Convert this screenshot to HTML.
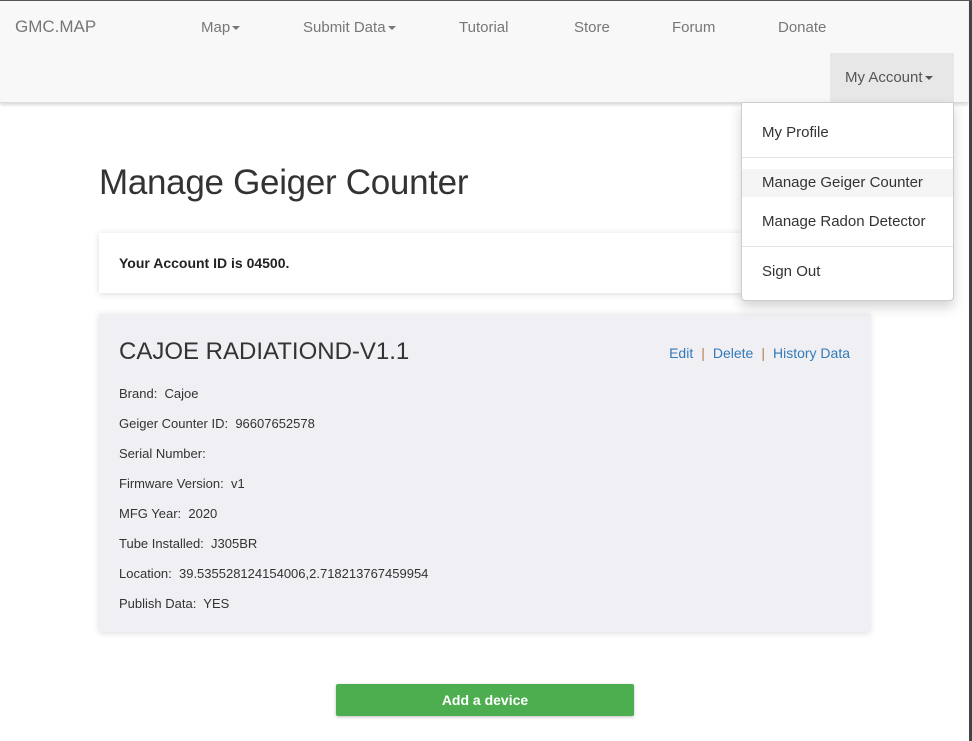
<!DOCTYPE html>
<html><head><style>
body{margin:0;width:972px;height:741px;background:#fff;font-family:"Liberation Sans",sans-serif;color:#333;position:relative;overflow:hidden}
.nav{position:absolute;left:0;top:0;width:968px;height:102px;background:#f8f8f8;border-bottom:1px solid #ddd;box-shadow:0 2px 3px rgba(0,0,0,.15)}
.nav span{position:absolute;top:19px;font-size:15px;color:#777}
.caret{display:inline-block;border-top:4px solid #777;border-left:4px solid transparent;border-right:4px solid transparent;vertical-align:middle;margin-left:2px}
.edge{position:absolute;right:0;top:0;width:3px;height:741px;background:#444;z-index:9}
.topedge{position:absolute;left:0;top:0;width:972px;height:1px;background:#555;z-index:9}
.acct{position:absolute;left:830px;top:53px;width:124px;height:49px;background:#e7e7e7}
.dd{position:absolute;left:741px;top:102px;width:211px;height:197px;background:#fff;border:1px solid #ccc;border-radius:0 0 4px 4px;box-shadow:0 6px 12px rgba(0,0,0,.175);z-index:5}
.dd div{position:absolute;left:0;width:211px;font-size:15px;color:#333;padding-left:20px;box-sizing:border-box}
.dd hr{position:absolute;left:0;width:211px;margin:0;border:0;border-top:1px solid #e5e5e5}
h1{position:absolute;left:99px;top:163px;margin:0;font-weight:normal;font-size:35px;color:#333;letter-spacing:-0.3px}
.idbox{position:absolute;left:99px;top:233px;width:771px;height:60px;background:#fff;box-shadow:0 1px 6px rgba(0,0,0,.15);font-size:14px;font-weight:bold;color:#222}
.card{position:absolute;left:99px;top:314px;width:771px;height:318px;background:#efeff4;box-shadow:0 1px 6px rgba(0,0,0,.15)}
.card h2{position:absolute;left:20px;top:24px;margin:0;font-weight:normal;font-size:24px;color:#333}
.links{position:absolute;right:20px;top:31px;font-size:14px;color:#337ab7}
.links i{font-style:normal;color:#b08050;margin:0 8px}
.row{position:absolute;left:20px;font-size:13px;color:#333}
.btn{position:absolute;left:336px;top:684px;width:298px;height:32px;background:#4cae4f;border-radius:2px;color:#fff;font-weight:bold;font-size:14px;text-align:center;line-height:32px;box-shadow:0 1px 3px rgba(0,0,0,.25)}
</style></head><body>
<div class="nav">
<span style="left:15px;font-size:17px;top:17px">GMC.MAP</span>
<span style="left:201px">Map<i class="caret"></i></span>
<span style="left:303px">Submit Data<i class="caret"></i></span>
<span style="left:459px">Tutorial</span>
<span style="left:574px">Store</span>
<span style="left:672px">Forum</span>
<span style="left:778px">Donate</span>
</div>
<div class="acct"></div>
<span style="position:absolute;left:845px;top:69px;font-size:15px;color:#555">My Account<i class="caret" style="border-top-color:#555"></i></span>
<h1>Manage Geiger Counter</h1>
<div class="idbox"><span style="position:absolute;left:20px;top:22px">Your Account ID is 04500.</span></div>
<div class="dd">
<div style="top:21px">My Profile</div>
<hr style="top:54px">
<div style="top:66px;height:28px;background:#f5f5f5;line-height:28px">Manage Geiger Counter</div>
<div style="top:110px">Manage Radon Detector</div>
<hr style="top:143px">
<div style="top:160px">Sign Out</div>
</div>
<div class="card">
<h2>CAJOE RADIATIOND-V1.1</h2>
<div class="links">Edit<i>|</i>Delete<i>|</i>History Data</div>
<div class="row" style="top:72px">Brand:&nbsp; Cajoe</div>
<div class="row" style="top:102px">Geiger Counter ID:&nbsp; 96607652578</div>
<div class="row" style="top:132px">Serial Number:</div>
<div class="row" style="top:162px">Firmware Version:&nbsp; v1</div>
<div class="row" style="top:192px">MFG Year:&nbsp; 2020</div>
<div class="row" style="top:222px">Tube Installed:&nbsp; J305BR</div>
<div class="row" style="top:252px">Location:&nbsp; 39.535528124154006,2.718213767459954</div>
<div class="row" style="top:282px">Publish Data:&nbsp; YES</div>
</div>
<div class="btn">Add a device</div>
<div class="edge"></div><div class="topedge"></div>
</body></html>
